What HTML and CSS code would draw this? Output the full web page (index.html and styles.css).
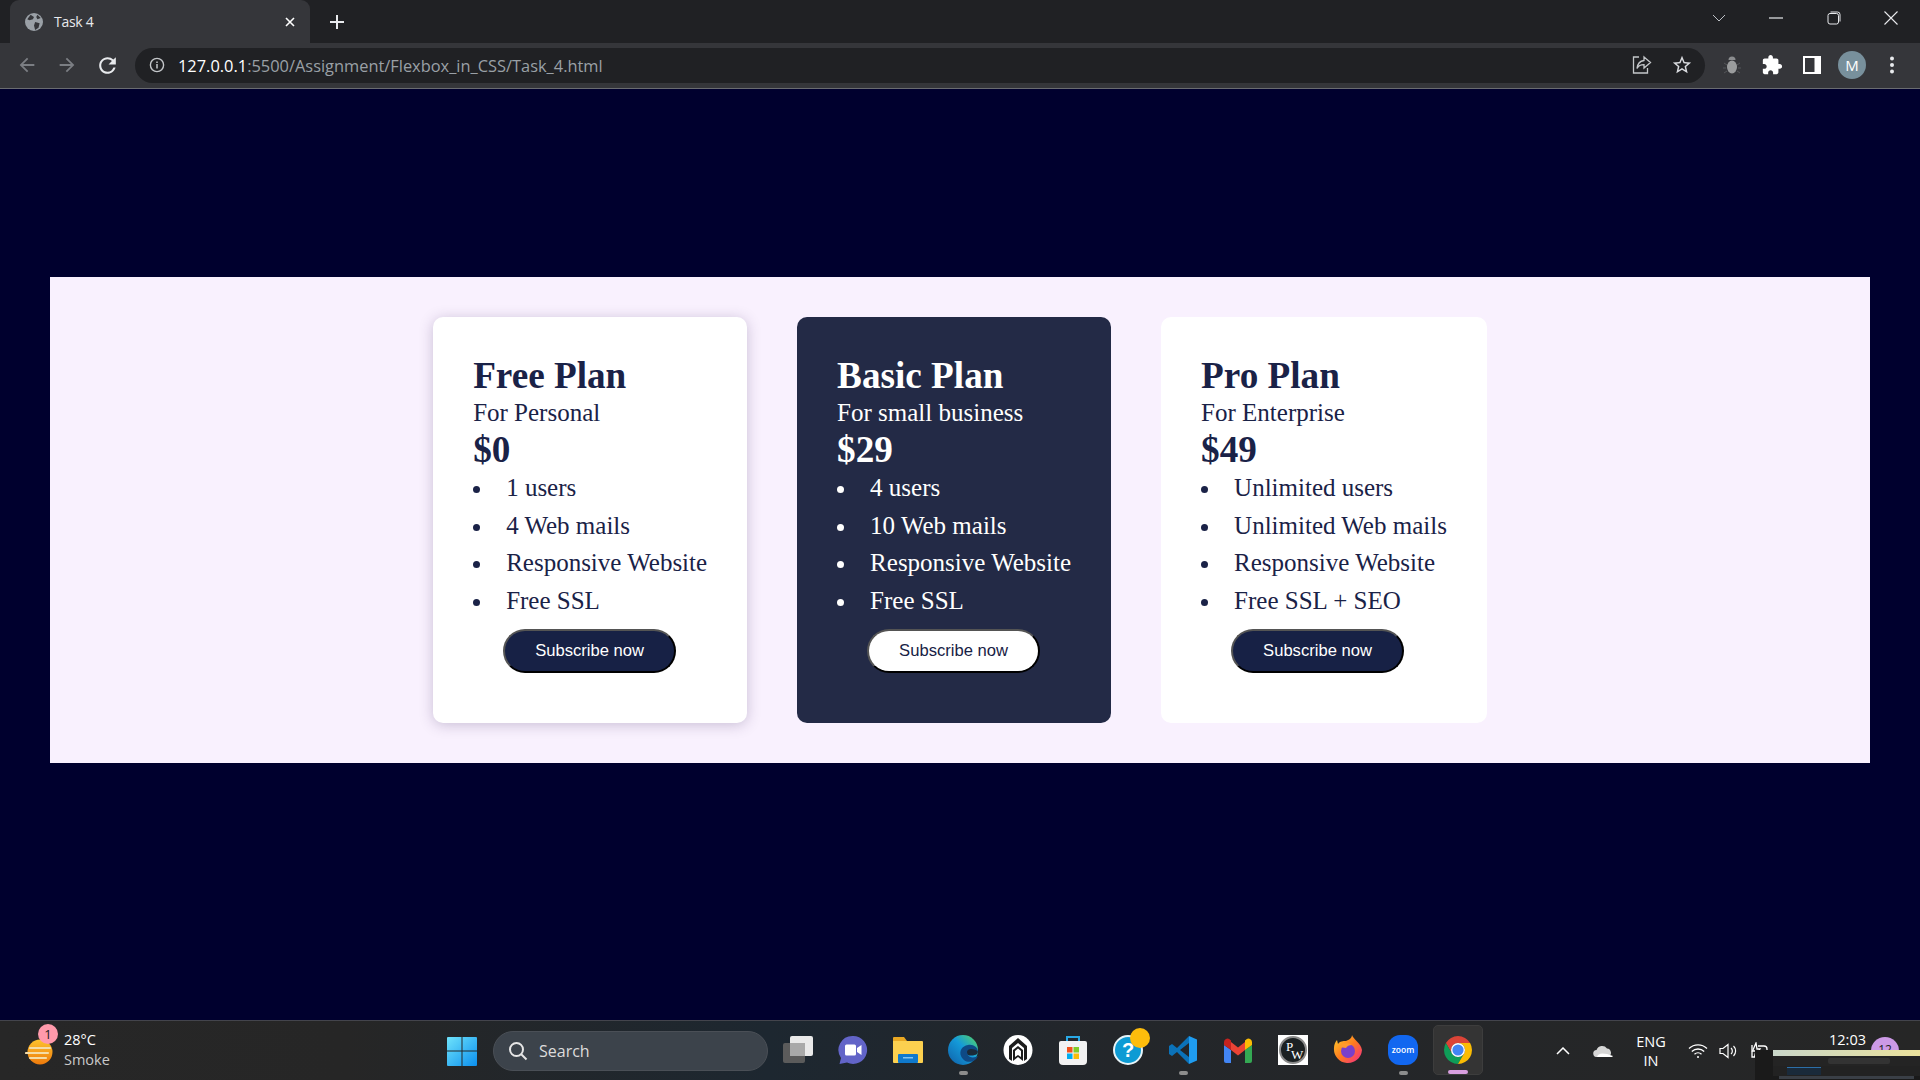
FILE: index.html
```html
<!DOCTYPE html>
<html lang="en">
<head>
    <meta charset="utf-8">
    <title>Task 4</title>
    <link rel="stylesheet" href="styles.css">
</head>
<body>
    <!-- browser window top -->
    <div class="tabbar">
        <div class="tab">
            <svg class="favicon" viewBox="0 0 16 16"><circle cx="8" cy="8" r="8" fill="#9aa0a6"/><path d="M5 1.5l3 2-1 2-3 1-2-1zM9 8l4 1-1 4-3 2-1-4zM11 1.5l3 3-3 1-1-2z" fill="#35363a"/></svg>
            <span class="tab-title">Task 4</span>
            <svg class="tab-close" viewBox="0 0 10 10"><path d="M1 1l8 8M9 1l-8 8" stroke="#fff" stroke-width="1.6"/></svg>
        </div>
        <svg class="new-tab" viewBox="0 0 14 14"><path d="M7 0v14M0 7h14" stroke="#e8eaed" stroke-width="2"/></svg>
        <div class="win-controls">
            <div class="win-btn"><svg width="14" height="8" viewBox="0 0 14 8"><path d="M1 1l6 6 6-6" fill="none" stroke="#bdc1c6"/></svg></div>
            <div class="win-btn"><svg width="14" height="2" viewBox="0 0 14 2"><path d="M0 1h14" stroke="#e8eaed" stroke-width="1.2"/></svg></div>
            <div class="win-btn"><svg width="14" height="14" viewBox="0 0 14 14"><rect x="1" y="2.5" width="10.5" height="10.5" rx="2" fill="none" stroke="#e8eaed"/><path d="M3.5 1h7a2.5 2.5 0 0 1 2.5 2.5v7" fill="none" stroke="#e8eaed"/></svg></div>
            <div class="win-btn"><svg width="14" height="14" viewBox="0 0 14 14"><path d="M.5.5l13 13M13.5.5l-13 13" stroke="#e8eaed" stroke-width="1.1"/></svg></div>
        </div>
    </div>
    <div class="toolbar">
        <div class="tool-btn"><svg class="ic20" viewBox="0 0 24 24"><path d="M20 11H7.83l5.59-5.59L12 4l-8 8 8 8 1.41-1.41L7.83 13H20v-2z" fill="#7b7e83"/></svg></div>
        <div class="tool-btn"><svg class="ic20 flip" viewBox="0 0 24 24"><path d="M20 11H7.83l5.59-5.59L12 4l-8 8 8 8 1.41-1.41L7.83 13H20v-2z" fill="#7b7e83"/></svg></div>
        <div class="tool-btn"><svg class="ic22" viewBox="0 0 24 24"><path d="M17.65 6.35A7.958 7.958 0 0 0 12 4c-4.42 0-7.99 3.58-7.99 8s3.57 8 7.99 8c3.73 0 6.84-2.55 7.73-6h-2.08A5.99 5.99 0 0 1 12 18c-3.31 0-6-2.69-6-6s2.69-6 6-6c1.66 0 3.14.69 4.22 1.78L13 11h7V4l-2.35 2.35z" fill="#e8eaed"/></svg></div>
        <div class="omnibox">
            <svg class="info" viewBox="0 0 16 16"><circle cx="8" cy="8" r="6.6" fill="none" stroke="#c4c7ca" stroke-width="1.4"/><path d="M8 7v4.5M8 4.4v1.5" stroke="#c4c7ca" stroke-width="1.5"/></svg>
            <span class="url"><span class="url-host">127.0.0.1</span>:5500/Assignment/Flexbox_in_CSS/Task_4.html</span>
            <div class="omni-icons">
                <div class="tool-btn"><svg width="20" height="20" viewBox="0 0 20 20" fill="none" stroke="#c4c7ca" stroke-width="1.3"><path d="M7 2H1.5v16h14v-5"/><path d="M12 2l6.5 5.5-6.5 5.5V9.7c-3 0-5.5 .8-7 3.8 .5-4.5 3-7.6 7-8z"/></svg></div>
                <div class="tool-btn"><svg class="ic20" viewBox="0 0 24 24"><path d="M22 9.24l-7.19-.62L12 2 9.19 8.63 2 9.24l5.46 4.73L5.82 21 12 17.27 18.18 21l-1.63-7.03L22 9.24zM12 15.4l-3.76 2.27 1-4.28-3.32-2.88 4.38-.38L12 6.1l1.71 4.04 4.38.38-3.32 2.88 1 4.28L12 15.4z" fill="#dadce0"/></svg></div>
            </div>
        </div>
        <div class="tool-right">
            <div class="tool-btn"><svg width="18" height="22" viewBox="0 0 18 22"><path d="M5.5 6a3.5 3.5 0 0 1 7 0z" fill="#8b8d8f"/><ellipse cx="9" cy="13" rx="5" ry="6.5" fill="#9a9c9d"/><path d="M1 9l3 2M17 9l-3 2M0 14h3M18 14h-3M1 19l3-2M17 19l-3-2" stroke="#55575a"/></svg></div>
            <div class="tool-btn"><svg class="ic20" viewBox="0 0 24 24"><path d="M20.5 11H19V7c0-1.1-.9-2-2-2h-4V3.5C13 2.12 11.88 1 10.5 1S8 2.12 8 3.5V5H4c-1.1 0-1.99.9-1.99 2v3.8H3.5c1.49 0 2.7 1.21 2.7 2.7s-1.21 2.7-2.7 2.7H2V20c0 1.1.9 2 2 2h3.8v-1.5c0-1.49 1.21-2.7 2.7-2.7 1.49 0 2.7 1.21 2.7 2.7V22H17c1.1 0 2-.9 2-2v-4h1.5c1.38 0 2.5-1.12 2.5-2.5S21.88 11 20.5 11z" fill="#fff"/></svg></div>
            <div class="tool-btn"><svg width="18" height="18" viewBox="0 0 18 18"><rect width="18" height="18" fill="#fff"/><rect x="2" y="2" width="9.5" height="14" fill="#35363a"/></svg></div>
            <div class="tool-btn"><div class="avatar">M</div></div>
            <div class="tool-btn"><svg width="4" height="18" viewBox="0 0 4 18" fill="#e8eaed"><circle cx="2" cy="2.5" r="2"/><circle cx="2" cy="9" r="2"/><circle cx="2" cy="15.5" r="2"/></svg></div>
        </div>
    </div>

    <!-- the actual page -->
    <main class="page">
        <section class="panel">
            <div class="card">
                <h2 class="plan-name">Free Plan</h2>
                <p class="plan-for">For Personal</p>
                <p class="plan-price">$0</p>
                <ul class="plan-list">
                    <li>1 users</li>
                    <li>4 Web mails</li>
                    <li>Responsive Website</li>
                    <li>Free SSL</li>
                </ul>
                <button class="subscribe">Subscribe now</button>
            </div>
            <div class="card card-dark">
                <h2 class="plan-name">Basic Plan</h2>
                <p class="plan-for">For small business</p>
                <p class="plan-price">$29</p>
                <ul class="plan-list">
                    <li>4 users</li>
                    <li>10 Web mails</li>
                    <li>Responsive Website</li>
                    <li>Free SSL</li>
                </ul>
                <button class="subscribe">Subscribe now</button>
            </div>
            <div class="card card-flat">
                <h2 class="plan-name">Pro Plan</h2>
                <p class="plan-for">For Enterprise</p>
                <p class="plan-price">$49</p>
                <ul class="plan-list">
                    <li>Unlimited users</li>
                    <li>Unlimited Web mails</li>
                    <li>Responsive Website</li>
                    <li>Free SSL + SEO</li>
                </ul>
                <button class="subscribe">Subscribe now</button>
            </div>
        </section>
    </main>

    <!-- windows taskbar -->
    <footer class="taskbar">
        <div class="weather">
            <svg class="weather-icon" viewBox="0 0 28 28"><defs><linearGradient id="sun" x1="0" y1="0" x2="0" y2="1"><stop offset="0" stop-color="#fdc32d"/><stop offset="1" stop-color="#ee7a0c"/></linearGradient></defs><circle cx="15" cy="14" r="12.5" fill="url(#sun)"/><path d="M5 10h20M1 15h22M5 20h16" stroke="#f4dca6" stroke-width="2.2" stroke-linecap="round"/></svg>
            <span class="badge">1</span>
            <div class="weather-text"><span class="temp">28°C</span><span class="cond">Smoke</span></div>
        </div>
        <svg class="start" viewBox="0 0 30 30"><defs><linearGradient id="winblue" x1="0" y1="0" x2="1" y2="1"><stop offset="0" stop-color="#6fe3fb"/><stop offset="1" stop-color="#0b8fee"/></linearGradient></defs><path d="M1 1h13.5v13.5H0V2a1 1 0 0 1 1-1zM15.5 1H29a1 1 0 0 1 1 1v12.5H15.5zM0 15.5h14.5V30H1a1 1 0 0 1-1-1zM15.5 15.5H30V29a1 1 0 0 1-1 1H15.5z" fill="url(#winblue)"/></svg>
        <div class="search">
            <svg class="search-icon" viewBox="0 0 20 20"><circle cx="8.5" cy="8.5" r="6.5" fill="none" stroke="#e6e6e6" stroke-width="2"/><path d="M13 13l5.5 5.5" stroke="#e6e6e6" stroke-width="2"/></svg>
            <span>Search</span>
        </div>
        <div class="dock">
            <div class="dock-item"><svg viewBox="0 0 30 30"><rect y="8" width="22" height="20" rx="2" fill="#5b5b5b"/><rect x="7" y="1" width="23" height="20" rx="2" fill="#e9e9e9"/><rect x="7" y="8" width="15" height="13" fill="#a9a9a9"/></svg></div>
            <div class="dock-item"><svg viewBox="0 0 30 30"><path d="M15 1a14 14 0 1 1-6 26.6L1.5 29 3 23A14 14 0 0 1 15 1z" fill="#6264c8"/><rect x="7" y="9.5" width="11" height="11" rx="1.5" fill="#fff"/><path d="M19 13l4.5-3v10L19 17z" fill="#fff"/></svg></div>
            <div class="dock-item"><svg viewBox="0 0 30 30"><path d="M0 3a1 1 0 0 1 1-1h10l3 4H0z" fill="#e9a823"/><path d="M0 6h29a1 1 0 0 1 1 1v20a1 1 0 0 1-1 1H1a1 1 0 0 1-1-1z" fill="#fcd04f"/><rect x="5" y="19" width="20" height="9" rx="1" fill="#0f79cc"/><rect x="10" y="22" width="10" height="1.5" fill="#7fc4f2"/></svg></div>
            <div class="dock-item running"><svg viewBox="0 0 30 30"><defs><linearGradient id="edge" x1="0" y1="1" x2="1" y2="0"><stop offset="0" stop-color="#0f5fa8"/><stop offset=".55" stop-color="#149ad9"/><stop offset="1" stop-color="#5ad85f"/></linearGradient></defs><circle cx="15" cy="15" r="15" fill="url(#edge)"/><path d="M30 17c0-5-5-8-10-7-6 1-9 6-7 11 2 5 8 8 14 4 1-1 2-2 3-4-3 2-9 2-10-1-1-2 2-3 4-3z" fill="#0e4a86"/><path d="M30 17c-1-2-4-3-7-3-2 0-4 1-4 3 0 1 .5 2 1 3 3 1 7 .5 9-1z" fill="#1b2a38"/></svg></div>
            <div class="dock-item"><svg viewBox="0 0 30 30"><ellipse cx="15" cy="15" rx="14.5" ry="15" fill="#fff"/><path d="M15 3L6 11v13l3 2V13l6-5 6 5v13l3-2V11z" fill="#1c1c1c"/><path d="M10 15l5-4 5 4v11l-5-4-5 4z" fill="#1c1c1c"/><path d="M12 16l3-2.5 3 2.5v6l-3-2-3 2z" fill="#fff"/></svg></div>
            <div class="dock-item"><svg viewBox="0 0 30 30"><path d="M9 8V2h12v6" fill="none" stroke="#29a9e6" stroke-width="2"/><path d="M3 6h24a2 2 0 0 1 2 2v18a4 4 0 0 1-4 4H5a4 4 0 0 1-4-4V8a2 2 0 0 1 2-2z" fill="#f2f2f2"/><rect x="9" y="12" width="5.5" height="5.5" fill="#f1511b"/><rect x="15.5" y="12" width="5.5" height="5.5" fill="#80cc28"/><rect x="9" y="18.5" width="5.5" height="5.5" fill="#00adef"/><rect x="15.5" y="18.5" width="5.5" height="5.5" fill="#fbbc09"/></svg></div>
            <div class="dock-item">
                <div class="help-icon">?</div>
                <span class="help-dot"></span>
            </div>
            <div class="dock-item running"><svg viewBox="0 0 30 30"><path d="M21 1L9 13 4 9 1 11v8l3 2 5-4 12 12v-7l-9-7 9-7z" fill="#0b72b9"/><path d="M21 1l8 3.5v21L21 29z" fill="#1f9cf0"/></svg></div>
            <div class="dock-item"><svg viewBox="0 0 30 30"><path d="M1 10v16a2 2 0 0 0 2 2h5V15z" fill="#4285f4"/><path d="M29 10v16a2 2 0 0 1-2 2h-5V15z" fill="#34a853"/><path d="M8 15l7 5.5 7-5.500V7l-7 5.5L8 7z" fill="#ea4335"/><path d="M1 10V7a3.5 3.5 0 0 1 5.5-2.800L8 5.5V15z" fill="#c5221f"/><path d="M29 10V7a3.5 3.5 0 0 0-5.5-2.800L22 5.5V15z" fill="#fbbc04"/></svg></div>
            <div class="dock-item"><div class="pw-icon"><div class="pw-disc"><span class="pw-p">P</span><span class="pw-w">W</span></div></div></div>
            <div class="dock-item"><svg viewBox="0 0 30 30"><defs><linearGradient id="fox" x1="0" y1="0" x2="1" y2="1"><stop offset="0" stop-color="#ffd22e"/><stop offset=".5" stop-color="#ff7a1e"/><stop offset="1" stop-color="#f3268f"/></linearGradient></defs><path d="M19 0c1 4 9 8 10 15a14 14 0 1 1-28-2c0-3 1-6 3-8l1 4c2-3 5-3 8-3 3-1 6-3 6-6z" fill="url(#fox)"/><circle cx="15" cy="16" r="7" fill="#7a3fcb"/><path d="M6 12c3-4 9-5 13-2-3 0-5 1-6 3z" fill="#ff9a2e"/></svg></div>
            <div class="dock-item running"><div class="zoom-icon">zoom</div></div>
            <div class="dock-item active">
                <svg viewBox="0 0 30 30"><path d="M2.88 8A14 14 0 0 1 27.12 8H15a7 7 0 0 0-6.06 10.5z" fill="#db4437"/><path d="M2.88 8A14 14 0 0 0 15 29l6.06-10.5A7 7 0 0 1 8.94 18.5z" fill="#0f9d58"/><path d="M27.12 8A14 14 0 0 1 15 29l6.06-10.5A7 7 0 0 0 15 8z" fill="#fbbc04"/><circle cx="15" cy="15" r="7" fill="#fff"/><circle cx="15" cy="15" r="5.6" fill="#4285f4"/></svg>
            </div>
        </div>
        <div class="tray">
            <div class="tray-item w40"><svg width="14" height="8" viewBox="0 0 14 8"><path d="M1 7l6-6 6 6" fill="none" stroke="#fff" stroke-width="1.5"/></svg></div>
            <div class="tray-item w40"><svg width="20" height="13" viewBox="0 0 20 13"><path d="M4 13a3.5 3.5 0 0 1-.5-7A6 6 0 0 1 14 4.500 4.500 4.500 0 0 1 15.5 13z" fill="#d6d6d6"/><path d="M4 13c1-4 6-5 16-1l-1 1z" fill="#fff"/></svg></div>
            <div class="tray-lang">ENG<br>IN</div>
            <div class="tray-item w38"><svg width="20" height="16" viewBox="0 0 20 16" fill="none" stroke="#fff" stroke-width="1.3"><path d="M1 5.5a13 13 0 0 1 18 0M3.800 8.500a9 9 0 0 1 12.400 0M6.500 11.300a5 5 0 0 1 7 0"/><circle cx="10" cy="14" r="1" fill="#fff" stroke="none"/></svg></div>
            <div class="tray-item w24"><svg width="20" height="16" viewBox="0 0 20 16" fill="none" stroke="#fff" stroke-width="1.2"><path d="M1 5.5h3L9 1.500v13l-5-4H1z"/><path d="M12 5a4 4 0 0 1 0 6M14.500 3a7 7 0 0 1 0 10"/></svg></div>
            <div class="tray-item w36"><svg width="20" height="18" viewBox="0 0 20 18" fill="none" stroke="#fff" stroke-width="1.3"><path d="M9 4h6a3 3 0 0 1 3 3v2"/><path d="M3 3v12h6"/><path d="M7 1L3.5 9H7l-1.500 6L11 7H8z" fill="#262626"/></svg></div>
            <div class="clock">12:03</div>
        </div>

        <!-- notification count and the peek thumbnail lie over the tray -->
        <span class="notify">12</span>
        <div class="peek">
            <div class="peek-title"></div>
            <div class="peek-bar"><span class="peek-find"></span></div>
            <div class="peek-tabs"><span class="peek-tab"></span></div>
            <div class="peek-line"></div>
        </div>
    </footer>
</body>
</html>
```
FILE: styles.css
```css
* {
    box-sizing: border-box;
}

body {
    margin: 0;
    height: 100vh;
    overflow: hidden;
    display: flex;
    flex-direction: column;
    background: #00002e;
    font-family: "Liberation Serif", serif;
}

/* browser chrome */
.tabbar {
    height: 43px;
    flex: none;
    display: flex;
    align-items: center;
    padding-left: 10px;
    background: #202124;
}

.tab {
    width: 300px;
    height: 43px;
    display: flex;
    align-items: center;
    padding: 0 15px;
    background: #35363a;
    border-radius: 9px 9px 0 0;
    color: #e8eaed;
    font: 14px "Open Sans", sans-serif;
}

.favicon {
    width: 18px;
    height: 18px;
}

.tab-title {
    margin-left: 11px;
    letter-spacing: -0.3px;
}

.tab-close {
    width: 10px;
    height: 10px;
    margin-left: auto;
}

.new-tab {
    width: 14px;
    height: 14px;
    margin-left: 20px;
}

.win-controls {
    margin-left: auto;
    display: flex;
}

.win-btn {
    width: 57.5px;
    height: 36px;
    display: flex;
    align-items: center;
    justify-content: center;
    margin-bottom: 7px;
}

.toolbar {
    height: 46px;
    flex: none;
    display: flex;
    align-items: center;
    padding: 0 0 1px 7px;
    background: #35363a;
    border-bottom: 1px solid #6a6c70;
}

.tool-btn {
    width: 40px;
    height: 35px;
    flex: none;
    display: flex;
    align-items: center;
    justify-content: center;
}

.ic20 {
    width: 22px;
    height: 22px;
}

.ic22 {
    width: 25px;
    height: 25px;
}

.flip {
    transform: scaleX(-1);
}

.omnibox {
    width: 1570px;
    height: 35px;
    margin-left: 8px;
    display: flex;
    align-items: center;
    padding-left: 14px;
    background: #202124;
    border-radius: 18px;
    font: 16.4px "Open Sans", sans-serif;
    color: #9aa0a6;
}

.info {
    width: 16px;
    height: 16px;
}

.url {
    margin-left: 13px;
}

.url-host {
    color: #fff;
}

.omni-icons {
    margin-left: auto;
    margin-right: 3px;
    display: flex;
}

.tool-right {
    margin-left: 7px;
    display: flex;
}

.avatar {
    width: 28px;
    height: 28px;
    border-radius: 50%;
    background: #78909c;
    color: #fff;
    font: 15px/28px "Open Sans", sans-serif;
    text-align: center;
}

/* pricing section */
.page {
    flex: 1;
    padding: 188px 50px 0;
    background: #00002e;
}

.panel {
    display: flex;
    justify-content: center;
    align-items: stretch;
    gap: 50px;
    padding: 40px 0;
    background: #f9f1fe;
}

.card {
    padding: 40px 40px 50px;
    background: #fff;
    color: #1a2247;
    border-radius: 10px;
    box-shadow: 0 2px 14px rgba(60, 40, 90, 0.25);
}

.card-dark {
    background: #232a46;
    color: #fffffe;
    box-shadow: none;
}

.card-flat {
    box-shadow: none;
}

.plan-name {
    margin: 0 0 -1px;
    font-size: 37.2px;
    line-height: 37.6px;
}

.plan-for {
    margin: 0;
    font-size: 25px;
    line-height: 37.6px;
}

.plan-price {
    margin: 0;
    font-size: 37.2px;
    font-weight: bold;
    line-height: 37.6px;
}

.plan-list {
    margin: 0.3px 0 0;
    padding-left: 21px;
    font-size: 25px;
    line-height: 37.6px;
}

.plan-list li {
    padding-left: 12px;
}

.subscribe {
    display: block;
    margin: 9.7px 0 0 30px;
    padding: 10px 30px;
    background: #172145;
    color: #fff;
    border: 2px outset #000;
    border-radius: 22px;
    font: 16.6px/20px "Liberation Sans", sans-serif;
}

.card-dark .subscribe {
    background: #fff;
    color: #172145;
}

/* taskbar */
.taskbar {
    height: 60px;
    flex: none;
    position: relative;
    display: flex;
    align-items: center;
    background: linear-gradient(90deg, #272727 0%, #262626 18%, #1d2730 40%, #23262a 58%, #262626 100%);
    border-top: 1px solid #43444c;
    color: #fff;
    font-family: "Open Sans", sans-serif;
}

.weather {
    width: 447px;
    flex: none;
    position: relative;
    display: flex;
    align-items: center;
    padding-left: 25px;
}

.weather-icon {
    width: 28px;
    height: 28px;
    margin-top: 2px;
}

.badge {
    position: absolute;
    left: 38px;
    top: -8px;
    width: 20px;
    height: 20px;
    border-radius: 50%;
    background: #ff9aab;
    color: #222;
    font-size: 13px;
    line-height: 20px;
    text-align: center;
}

.weather-text {
    margin: -2px 0 0 11px;
    display: flex;
    flex-direction: column;
    font-size: 14.5px;
    line-height: 20px;
}

.cond {
    color: #c9c9c9;
}

.start {
    width: 30px;
    height: 30px;
    flex: none;
}

.search {
    width: 275px;
    height: 40px;
    flex: none;
    margin-left: 16px;
    display: flex;
    align-items: center;
    padding-left: 14px;
    background: #3c434b;
    border: 1px solid #4a4f56;
    border-radius: 20px;
    color: #dcdcdc;
    font-size: 16px;
}

.search-icon {
    width: 20px;
    height: 20px;
    margin-right: 11px;
}

.dock {
    margin: 0 0 1px 2.5px;
    display: flex;
}

.dock-item {
    width: 55px;
    height: 50px;
    position: relative;
    display: flex;
    align-items: center;
    justify-content: center;
}

.dock-item svg {
    width: 30px;
    height: 30px;
}

.running::after {
    content: "";
    position: absolute;
    left: 23px;
    bottom: 0;
    width: 9px;
    height: 4px;
    border-radius: 2px;
    background: #8d8d8d;
}

.active {
    background: #343434;
    border: 1px solid #3d3d3d;
    border-radius: 5px;
    width: 50px;
    margin-left: 2px;
}

.active::after {
    content: "";
    position: absolute;
    left: 14px;
    bottom: 0;
    width: 20px;
    height: 4px;
    border-radius: 2px;
    background: #d99fe0;
}

.help-icon {
    width: 30px;
    height: 30px;
    border-radius: 50%;
    background: #0d9bd4;
    border: 2px solid #e8f4f8;
    color: #fff;
    font: bold 20px/26px "Liberation Sans", sans-serif;
    text-align: center;
}

.help-dot {
    position: absolute;
    left: 29px;
    top: 3px;
    width: 20px;
    height: 20px;
    border-radius: 50%;
    background: #fdbd0c;
}

.pw-icon {
    width: 30px;
    height: 30px;
    padding: 1px;
    background: #fff;
}

.pw-disc {
    position: relative;
    height: 28px;
    border-radius: 50%;
    background: #1b2022;
    border: 2px solid #8a8a8a;
    color: #fff;
    font: 13px/13px "Liberation Serif", serif;
}

.pw-p {
    position: absolute;
    left: 5px;
    top: 2px;
}

.pw-w {
    position: absolute;
    left: 10px;
    top: 10px;
}

.zoom-icon {
    width: 30px;
    height: 30px;
    border-radius: 12px;
    background: #1267f0;
    color: #fff;
    font: 600 8.5px/30px "Open Sans", sans-serif;
    text-align: center;
}

.tray {
    margin-left: auto;
    width: 377px;
    display: flex;
    align-items: center;
}

.tray-item {
    display: flex;
    justify-content: center;
    align-items: center;
}

.w40 {
    width: 40px;
}

.w38 {
    width: 38px;
}

.w36 {
    width: 36px;
}

.w24 {
    width: 24px;
}

.tray-lang {
    width: 56px;
    text-align: center;
    font-size: 14.5px;
    line-height: 19px;
}

.clock {
    width: 141px;
    padding-bottom: 22px;
    text-align: center;
    font-size: 14.5px;
}

.notify {
    position: absolute;
    left: 1871px;
    top: 16px;
    width: 28px;
    height: 28px;
    border-radius: 50%;
    background: #cc99e6;
    color: #222;
    font-size: 12px;
    line-height: 26px;
    text-align: center;
}

.peek {
    position: absolute;
    left: 1755px;
    top: 29px;
    width: 165px;
    height: 30px;
    padding-left: 18px;
    background: #1a1a1a;
}

.peek-title {
    height: 6px;
    background: linear-gradient(90deg, #c9d6c9, #ebe29c);
}

.peek-bar {
    height: 10px;
    padding: 2px 0 0 55px;
    background: #242424;
}

.peek-find {
    display: block;
    width: 62px;
    height: 6px;
    border-radius: 2px;
    background: #333;
}

.peek-tabs {
    height: 10px;
    padding: 1px 0 0 14px;
    background: #222;
}

.peek-tab {
    display: block;
    width: 34px;
    height: 8px;
    background: #1a2a3a;
    border-top: 1px solid #2c6fa8;
}

.peek-line {
    height: 3px;
    margin: 0 6px;
    background: #3a3f46;
}
```
